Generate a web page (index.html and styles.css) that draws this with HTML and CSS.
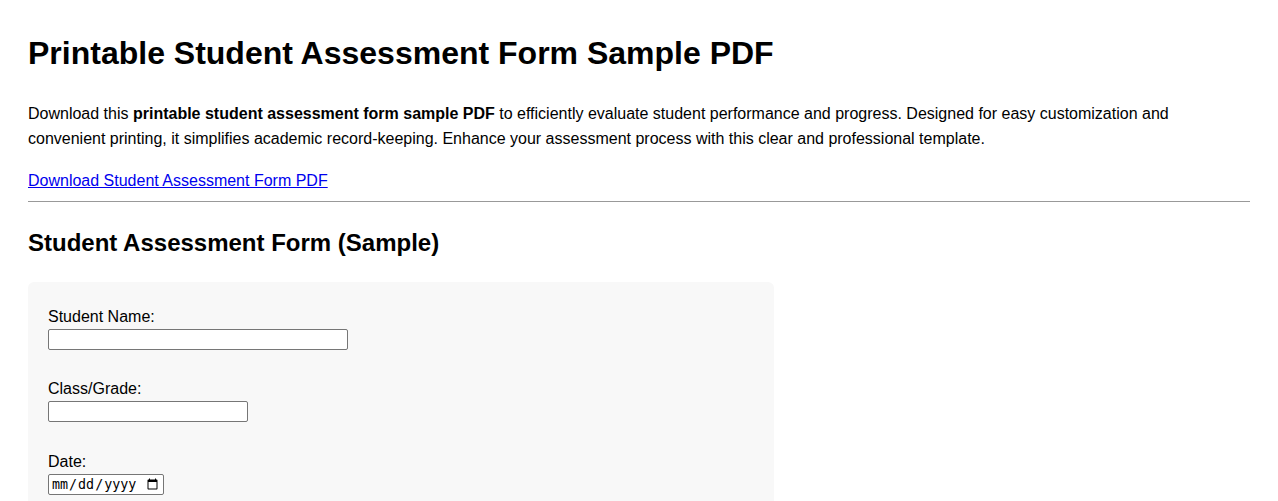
FILE: index.html
```html
<!DOCTYPE html>
<html lang="en">
<head>
<meta charset="utf-8">
<title>Printable Student Assessment Form Sample PDF</title>
<link rel="stylesheet" href="styles.css">
</head>
<body>
<main class="page">
  <h1 class="title">Printable Student Assessment Form Sample PDF</h1>
  <p class="intro">Download this <strong>printable student assessment form sample PDF</strong> to efficiently evaluate student performance and progress. Designed for easy customization and convenient printing, it simplifies academic record-keeping. Enhance your assessment process with this clear and professional template.</p>
  <p class="download"><a href="#">Download Student Assessment Form PDF</a></p>
  <hr class="rule">
  <h2 class="subtitle">Student Assessment Form (Sample)</h2>
  <form class="form-box">
    <div class="field">
      <label for="name">Student Name:</label>
      <input id="name" type="text" class="input-wide">
    </div>
    <div class="field">
      <label for="grade">Class/Grade:</label>
      <input id="grade" type="text" class="input-mid">
    </div>
    <div class="field">
      <label for="date">Date:</label>
      <input id="date" type="date" class="input-date">
    </div>
  </form>
</main>
</body>
</html>
```

FILE: styles.css
```css
html, body {
  margin: 0;
  padding: 0;
  background: #fff;
}
body {
  font-family: "Liberation Sans", Arial, sans-serif;
  color: #000;
  line-height: 1.6;
  font-size: 16px;
}
.page {
  padding: 20px 28px;
}
.title {
  font-size: 32px;
  line-height: 1.2;
  margin: 14px 0 29px;
}
.intro {
  line-height: 25px;
  margin: 0 0 17px;
}
.download {
  margin: 0 0 7px;
}
.download a {
  color: #0000ee;
}
.rule {
  border: 0;
  border-top: 1px solid #999;
  margin: 0;
}
.subtitle {
  font-size: 24px;
  line-height: 1.2;
  margin: 27px 0 24px;
}
.form-box {
  width: 746px;
  box-sizing: border-box;
  background: #f8f8f8;
  border-radius: 6px;
  padding: 26px 20px 22px;
}
.field {
  margin-bottom: 30.5px;
}
.field label {
  display: block;
  line-height: 18px;
  margin-bottom: 3px;
}
.field input {
  display: block;
  font-size: 13.33px;
  border: 1px solid #767676;
  border-radius: 2px;
  height: 21px;
  box-sizing: border-box;
  padding: 1px 2px;
  background: #fff;
  margin: 0;
}
.input-wide { width: 300px; }
.input-mid { width: 200px; }
.input-date { width: 116px; }
```
